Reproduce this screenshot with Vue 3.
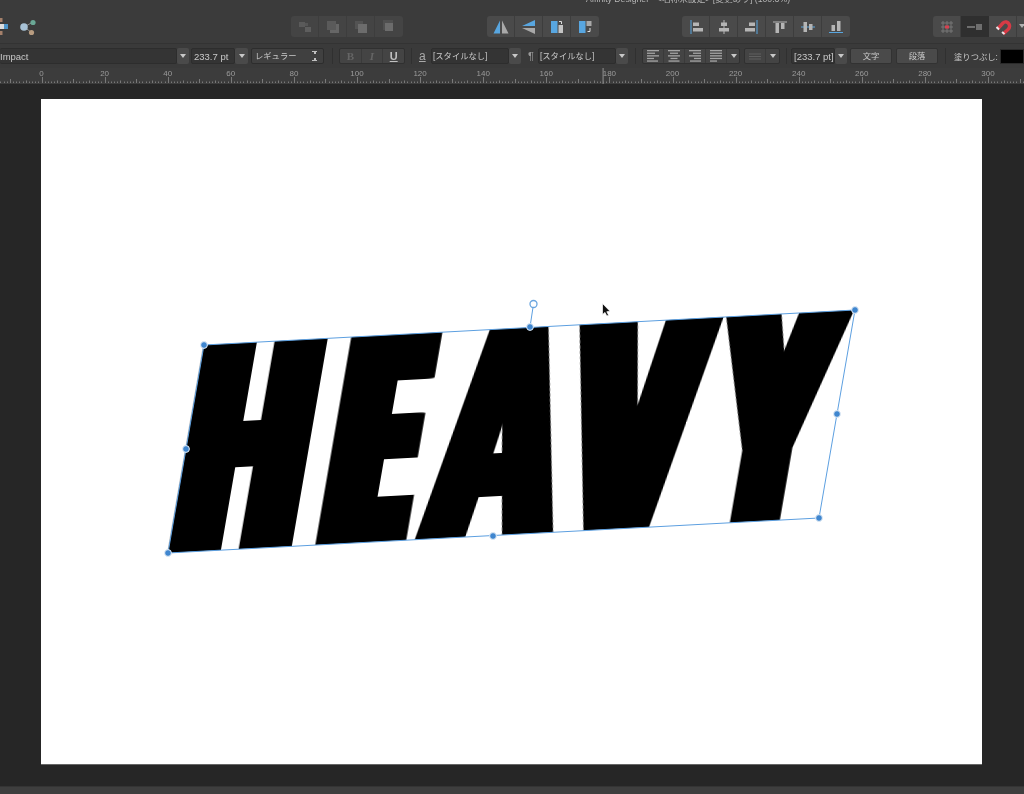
<template>
  <div class="app">
    <header class="topbar soft">
      <div class="title">Affinity Designer - &lt;名称未設定&gt; [変更あり] (100.3%)</div>
      <div class="tools">
        <svg class="persona" width="8" height="18" viewBox="0 0 8 18">
          <rect x="0" y="0" width="2.5" height="4" fill="#a5806a" />
          <rect x="0" y="6" width="4" height="5" fill="#ddd" />
          <rect x="4" y="6" width="4" height="5" fill="#4f94c8" />
          <rect x="0" y="13" width="2.5" height="4" fill="#a5806a" />
        </svg>
        <span class="tool-sep"></span>
        <svg class="share" width="18" height="18" viewBox="0 0 18 18">
          <path d="M5 9 L14 4 M5 9 L12 14" stroke="#8b8b8b" stroke-width="1" />
          <circle cx="5" cy="9" r="3.8" fill="#a8c2d6" />
          <circle cx="14" cy="4.5" r="2.6" fill="#6aa896" />
          <circle cx="12.5" cy="14.5" r="2.6" fill="#b89c80" />
        </svg>

        <div class="group group-off group-a">
          <button v-for="n in 4" :key="n" class="tbtn">
            <svg width="16" height="16" viewBox="0 0 16 16">
              <template v-if="n === 1">
                <rect x="2" y="3" width="6" height="5" fill="#5a5a5a" />
                <rect x="8" y="8" width="6" height="5" fill="#5e5e5e" />
                <rect x="8" y="4" width="3" height="3" fill="#555" />
              </template>
              <template v-else-if="n === 2">
                <rect x="2" y="2" width="9" height="9" fill="#5a5a5a" />
                <path d="M11 5h3v9H5v-3h6z" fill="#666" />
              </template>
              <template v-else-if="n === 3">
                <rect x="2" y="2" width="8" height="8" fill="#535353" />
                <rect x="5" y="5" width="9" height="9" fill="#6c6c6c" />
              </template>
              <template v-else>
                <rect x="2" y="1" width="10" height="10" fill="#505050" />
                <rect x="4" y="4" width="8" height="8" fill="#6c6c6c" />
              </template>
            </svg>
          </button>
        </div>

        <div class="group group-b">
          <button class="tbtn">
            <svg width="18" height="16" viewBox="0 0 18 16">
              <path d="M8 1.5V14.5H1.5z" fill="#58a6e0" />
              <path d="M10 1.5V14.5H16.5z" fill="#a9a9a9" />
            </svg>
          </button>
          <button class="tbtn">
            <svg width="18" height="16" viewBox="0 0 18 16">
              <path d="M15 1V7H2z" fill="#58a6e0" />
              <path d="M15 15V9H2z" fill="#a9a9a9" />
            </svg>
          </button>
          <button class="tbtn">
            <svg width="16" height="16" viewBox="0 0 16 16">
              <rect x="2" y="2" width="6.5" height="12" fill="#58a6e0" />
              <path d="M9.5 6h4.5v8H9.5z" fill="#c4c4c4" />
              <path d="M10 2.5h2.5V5" fill="none" stroke="#ddd" stroke-width="1" />
            </svg>
          </button>
          <button class="tbtn">
            <svg width="16" height="16" viewBox="0 0 16 16">
              <rect x="2" y="2" width="6.5" height="12" fill="#58a6e0" />
              <rect x="9.5" y="2" width="5" height="5" fill="#a9a9a9" />
              <path d="M13 9v3.5h-2.5" fill="none" stroke="#ddd" stroke-width="1" />
            </svg>
          </button>
        </div>

        <div class="group group-c">
          <button class="tbtn nar">
            <svg width="16" height="16" viewBox="0 0 16 16">
              <rect x="2.5" y="1" width="1" height="14" fill="#58a6e0" />
              <rect x="5" y="3.5" width="6" height="3.5" fill="#b5b5b5" />
              <rect x="5" y="9" width="10" height="3.5" fill="#b5b5b5" />
            </svg>
          </button>
          <button class="tbtn nar">
            <svg width="16" height="16" viewBox="0 0 16 16">
              <rect x="7.5" y="1" width="1" height="14" fill="#b5b5b5" />
              <rect x="5" y="3.5" width="6" height="3.5" fill="#b5b5b5" />
              <rect x="3" y="9" width="10" height="3.5" fill="#b5b5b5" />
            </svg>
          </button>
          <button class="tbtn nar">
            <svg width="16" height="16" viewBox="0 0 16 16">
              <rect x="12.5" y="1" width="1" height="14" fill="#58a6e0" />
              <rect x="5" y="3.5" width="6" height="3.5" fill="#b5b5b5" />
              <rect x="1" y="9" width="10" height="3.5" fill="#b5b5b5" />
            </svg>
          </button>
          <button class="tbtn nar">
            <svg width="16" height="16" viewBox="0 0 16 16">
              <rect x="1" y="2.5" width="14" height="1" fill="#b5b5b5" />
              <rect x="3.5" y="4" width="3.5" height="10" fill="#b5b5b5" />
              <rect x="9" y="4" width="3.5" height="6" fill="#b5b5b5" />
            </svg>
          </button>
          <button class="tbtn nar">
            <svg width="16" height="16" viewBox="0 0 16 16">
              <rect x="1" y="7.5" width="14" height="1" fill="#58a6e0" />
              <rect x="3.5" y="3" width="3.5" height="10" fill="#b5b5b5" />
              <rect x="9" y="5" width="3.5" height="6" fill="#b5b5b5" />
            </svg>
          </button>
          <button class="tbtn nar">
            <svg width="16" height="16" viewBox="0 0 16 16">
              <rect x="1" y="13" width="14" height="1" fill="#58a6e0" />
              <rect x="3.5" y="6" width="3.5" height="6" fill="#b5b5b5" />
              <rect x="9" y="2" width="3.5" height="10" fill="#b5b5b5" />
            </svg>
          </button>
        </div>

        <div class="group group-d">
          <button class="tbtn nar">
            <svg width="16" height="16" viewBox="0 0 16 16">
              <path d="M4 2v12M8 2v12M12 2v12M2 4h12M2 8h12M2 12h12" stroke="#777" stroke-width="1" />
              <rect x="6" y="6.5" width="4" height="3" fill="#d8404f" />
            </svg>
          </button>
          <button class="tbtn nar dark">
            <svg width="18" height="16" viewBox="0 0 18 16">
              <rect x="1" y="7" width="8" height="2" fill="#6e6e6e" />
              <rect x="10" y="5" width="6" height="6" fill="#6e6e6e" />
            </svg>
          </button>
          <button class="tbtn nar">
            <svg width="18" height="18" viewBox="0 0 18 18">
              <path d="M3.5 11 L9 5 C11 3 14 4 15 6 C16 8 15.5 10 14 11.5 L9 16" fill="none" stroke="#d73a45" stroke-width="3.4" />
              <path d="M2.5 10 L5 12.5 M8 15 L10.5 17" stroke="#e8e8e8" stroke-width="2" transform="translate(0 -1)" />
            </svg>
          </button>
          <span class="snap-arrow"></span>
        </div>
      </div>
    </header>

    <div class="context soft">
      <div class="field font-name">Impact</div>
      <button class="drop"><i></i></button>
      <div class="field size">233.7 pt</div>
      <button class="drop drop-s"><i></i></button>
      <div class="field weight">
        <span class="ja">レギュラー</span>
        <span class="updown"></span>
      </div>
      <span class="ctx-sep sep-1"></span>
      <div class="btn-row biu">
        <span class="off serif">B</span>
        <span class="off serif it">I</span>
        <span class="under">U</span>
      </div>
      <span class="ctx-sep sep-2"></span>
      <span class="char-a">a</span>
      <div class="field style-a ja">[スタイルなし]</div>
      <button class="drop"><i></i></button>
      <span class="para">¶</span>
      <div class="field style-b ja">[スタイルなし]</div>
      <button class="drop"><i></i></button>
      <span class="ctx-sep sep-3"></span>
      <div class="btn-row aligns">
        <span v-for="a in alignRows" :key="a.id" class="align">
          <svg width="14" height="12" viewBox="0 0 14 12">
            <rect v-for="(r, i) in a.rows" :key="i" :x="r[0]" :y="i * 2.6" :width="r[1]" height="1.3" fill="#a5a5a5" />
          </svg>
        </span>
        <span class="align narrow"><i class="tri"></i></span>
      </div>
      <div class="btn-row lines">
        <span class="align wide">
          <svg width="14" height="8" viewBox="0 0 14 8">
            <path d="M1 2h12M1 4.5h12M1 7h12" stroke="#5f5f5f" stroke-width="1" />
          </svg>
        </span>
        <span class="align narrow"><i class="tri"></i></span>
      </div>
      <span class="ctx-sep sep-4"></span>
      <div class="field leading">[233.7 pt]</div>
      <button class="drop"><i></i></button>
      <button class="push first ja">文字</button>
      <button class="push ja">段落</button>
      <span class="ctx-sep sep-5"></span>
      <span class="fill-label ja">塗りつぶし:</span>
      <span class="swatch"></span>
    </div>

    <div class="ruler soft">
      <span v-for="l in rulerLabels" :key="l.v" class="ruler-label" :style="{ left: l.x + 'px' }">{{ l.v }}</span>
      <svg class="ruler-ticks" width="1024" height="16" viewBox="0 0 1024 16">
        <path :d="rulerPath" stroke="#8e8e8e" stroke-width="1" fill="none" />
        <rect x="602.5" y="0" width="1.2" height="16" fill="#9a9a9a" />
      </svg>
    </div>

    <main class="canvas">
      <div class="page">
        <div class="heavy">
          <span v-for="l in letters" :key="l.ch" class="slot" :style="l.slot">
            <span class="glyph" :style="l.glyph">{{ l.ch }}</span>
          </span>
        </div>
        <svg class="art" viewBox="41 99 941 665">
          <polygon points="204,345 855,310 819,518 168,553" fill="none" stroke="#5c9fe0" stroke-width="1" />
          <line x1="530" y1="327" x2="533.5" y2="304" stroke="#5c9fe0" stroke-width="1" />
          <circle cx="533.5" cy="304" r="3.5" fill="#fff" stroke="#6aa5df" stroke-width="1.3" />
          <circle v-for="(h, i) in handles" :key="i" :cx="h[0]" :cy="h[1]" r="3.4" fill="#3f86cf" stroke="#e6eef6" stroke-width="1" />
          <path d="M602.5 303.5 L602.5 314.5 L605 312.4 L606.8 316 L608.6 315.2 L606.8 311.7 L610 311.3 Z" fill="#111" stroke="#fff" stroke-width="0.7" />
        </svg>
      </div>
    </main>

    <footer class="statusbar"></footer>
  </div>
</template>

<script setup>
const RULER_ZERO = 41.5
const UNIT = 3.155

const handles = [
  [204, 345],
  [855, 310],
  [819, 518],
  [168, 553],
  [186, 449],
  [837, 414],
  [493, 536],
  [530, 327]
]

const alignRows = [
  { id: 'left', rows: [[1, 12], [1, 8], [1, 12], [1, 7], [1, 11]] },
  { id: 'center', rows: [[1, 12], [3, 8], [1, 12], [3.5, 7], [1.5, 11]] },
  { id: 'right', rows: [[1, 12], [5, 8], [1, 12], [6, 7], [2, 11]] },
  { id: 'justify', rows: [[1, 12], [1, 12], [1, 12], [1, 12], [1, 7]] }
]

const rulerLabels = []
for (let v = 0; v <= 300; v += 20) {
  rulerLabels.push({ v, x: RULER_ZERO + v * UNIT })
}

let d = ''
for (let u = -14; u <= 312; u++) {
  const x = Math.round(RULER_ZERO + u * UNIT) + 0.5
  let top = 13.5
  if (u % 20 === 0) top = 9
  else if (u % 10 === 0) top = 11
  else if (u % 5 === 0) top = 12.5
  d += `M${x} ${top}V15`
}
const rulerPath = d

// Impact is not installed: Inter Black squeezed per letter and fattened sideways
const fatten = (px, scale) => {
  const parts = []
  const reach = px / scale
  for (let o = 2; o <= reach; o += 2) parts.push(`${o}px 0 #000`)
  return parts.join(',')
}

const letters = [
  { ch: 'H', w: 148, s: 0.54, fat: 23, off: -7.5 },
  { ch: 'E', w: 98, s: 0.393, fat: 33, off: -6 },
  { ch: 'A', w: 130, s: 0.58, fat: 14, off: -3 },
  { ch: 'V', w: 147, s: 0.57, fat: 22, off: -4 },
  { ch: 'Y', w: 128, s: 0.51, fat: 22, off: -4 }
].map((l) => ({
  ch: l.ch,
  slot: { width: l.w + 'px' },
  glyph: {
    transform: `translateX(${l.off}px) scaleX(${l.s})`,
    textShadow: fatten(l.fat, l.s)
  }
}))
</script>

<style scoped>
.app {
  width: 1024px;
  height: 794px;
  display: flex;
  flex-direction: column;
  overflow: hidden;
  background: #262626;
  font-family: 'Liberation Sans', 'Noto Sans CJK JP', sans-serif;
  color: #c9c9c9;
  font-size: 9.5px;
}

button {
  font: inherit;
  color: inherit;
  border: 0;
  padding: 0;
}

.soft {
  filter: blur(0.35px);
}

.topbar {
  height: 44px;
  flex: none;
  background: #3b3b3b;
  border-bottom: 1px solid #333;
  box-sizing: border-box;
  overflow: hidden;
}

.title {
  height: 16px;
  margin-top: -7px;
  margin-left: 586px;
  font-size: 8.7px;
  line-height: 12px;
  color: #b5b5b5;
  white-space: nowrap;
}

.tools {
  display: flex;
  align-items: center;
  height: 21px;
  margin-top: 7px;
}

.persona {
  flex: none;
  margin-top: 1px;
}

.tool-sep {
  width: 1px;
  height: 18px;
  margin-left: 6px;
  background: #2f2f2f;
}

.share {
  flex: none;
  margin-left: 5px;
}

.group {
  display: flex;
  height: 21px;
  border-radius: 3px;
  background: #4a4a4a;
  overflow: hidden;
  flex: none;
}

.group-a { margin-left: 254px; }
.group-b { margin-left: 84px; }
.group-c { margin-left: 83px; }
.group-d { margin-left: 83px; width: 92px; }

.group-off {
  background: #444;
}

.tbtn {
  width: 28px;
  height: 21px;
  display: flex;
  align-items: center;
  justify-content: center;
  background: transparent;
  border-right: 1px solid #3d3d3d;
}

.tbtn:last-child {
  border-right: 0;
}

.nar {
  width: 28px;
}

.dark {
  background: #2f2f2f;
  border-right: 0;
}

.snap-arrow {
  width: 0;
  height: 0;
  margin: 8px 0 0 2px;
  border: 3.5px solid transparent;
  border-top: 4px solid #b0b0b0;
}

.context {
  height: 24px;
  flex: none;
  display: flex;
  align-items: center;
  background: #3a3a3a;
  box-sizing: border-box;
}

.field {
  height: 16px;
  line-height: 15px;
  box-sizing: border-box;
  background: #343434;
  border: 1px solid #2d2d2d;
  border-radius: 2px;
  padding: 0 3px;
  white-space: nowrap;
  flex: none;
}

.ja {
  font-size: 8.3px;
}

.font-name {
  width: 177px;
  padding-left: 0;
  border-left: 0;
}

.size {
  width: 44px;
  margin-left: 2px;
  padding-left: 2px;
}

.weight {
  width: 73px;
  margin-left: 3px;
  padding-left: 3px;
  display: flex;
  justify-content: space-between;
  background: #404040;
}

.updown {
  width: 5px;
  height: 10px;
  margin: 2px 3px 0 0;
  background:
    linear-gradient(45deg, transparent 50%, #c0c0c0 50%) 0 0 / 3px 3px no-repeat,
    linear-gradient(-45deg, transparent 50%, #c0c0c0 50%) 2.5px 0 / 3px 3px no-repeat,
    linear-gradient(135deg, transparent 50%, #c0c0c0 50%) 0 7px / 3px 3px no-repeat,
    linear-gradient(-135deg, transparent 50%, #c0c0c0 50%) 2.5px 7px / 3px 3px no-repeat;
}

.drop {
  width: 12px;
  height: 16px;
  flex: none;
  background: #4a4a4a;
  border-radius: 2px;
  display: flex;
  align-items: center;
  justify-content: center;
}

.drop i,
.tri {
  display: block;
  width: 0;
  height: 0;
  margin-top: 3px;
  border: 3px solid transparent;
  border-top: 4px solid #c8c8c8;
}

.drop-s {
  width: 13px;
}

.ctx-sep {
  width: 1px;
  height: 16px;
  background: #303030;
  flex: none;
}

.sep-1 { margin-left: 8px; }
.sep-2 { margin-left: 6px; }
.sep-3 { margin-left: 7px; }
.sep-4 { margin-left: 6px; }
.sep-5 { margin-left: 7px; }

.btn-row {
  display: flex;
  height: 16px;
  flex: none;
  background: #444;
  border: 1px solid #303030;
  border-radius: 2px;
  box-sizing: border-box;
  overflow: hidden;
}

.biu {
  width: 66px;
  margin-left: 6px;
}

.biu span {
  flex: 1;
  text-align: center;
  font-size: 11px;
  line-height: 14px;
  font-weight: 700;
  border-right: 1px solid #3a3a3a;
}

.biu span:last-child {
  border-right: 0;
}

.serif {
  font-family: 'Liberation Serif', serif;
}

.it {
  font-style: italic;
}

.off {
  color: #656565;
}

.under {
  text-decoration: underline;
  color: #c0c0c0;
}

.char-a {
  margin-left: 7px;
  width: 11px;
  font-size: 12px;
  line-height: 12px;
  text-decoration: underline;
  color: #aaa;
  flex: none;
}

.style-a {
  width: 78px;
  margin-left: 1px;
  padding-left: 1px;
}

.para {
  margin-left: 7px;
  width: 9px;
  font-size: 11px;
  color: #999;
  flex: none;
}

.style-b {
  width: 78px;
  margin-left: 1px;
  padding-left: 1px;
}

.aligns {
  width: 98px;
  margin-left: 6px;
}

.align {
  width: 21px;
  display: flex;
  align-items: center;
  justify-content: center;
  border-right: 1px solid #3a3a3a;
  box-sizing: border-box;
  flex: none;
}

.align:last-child {
  border-right: 0;
}

.narrow {
  width: 13px;
}

.wide {
  width: 21px;
}

.lines {
  width: 36px;
  margin-left: 4px;
}

.leading {
  width: 44px;
  margin-left: 4px;
  padding-left: 2px;
}

.push {
  width: 42px;
  height: 16px;
  flex: none;
  margin-left: 4px;
  background: #4a4a4a;
  border: 1px solid #323232;
  border-radius: 2px;
  box-sizing: border-box;
  line-height: 14px;
  text-align: center;
}

.push.first {
  margin-left: 3px;
}

.fill-label {
  margin-left: 8px;
  width: 46px;
  white-space: nowrap;
  flex: none;
}

.swatch {
  width: 24px;
  height: 15px;
  flex: none;
  background: #000;
  border: 1px solid #2a2a2a;
  box-sizing: border-box;
}

.ruler {
  position: relative;
  height: 16px;
  flex: none;
  background: #3c3c3c;
}

.ruler-label {
  position: absolute;
  top: 1px;
  transform: translateX(-50%);
  font-size: 8px;
  line-height: 10px;
  color: #9b9b9b;
}

.ruler-ticks {
  position: absolute;
  left: 0;
  top: 0;
  opacity: 0.75;
}

.canvas {
  flex: 1;
  background: #262626;
  padding: 15px 42px 0 41px;
  min-height: 0;
}

.page {
  position: relative;
  height: 665px;
  background: #fff;
  box-shadow: 0 1px 0 #666;
}

.art {
  position: absolute;
  left: 0;
  top: 0;
  width: 941px;
  height: 665px;
  overflow: visible;
}

.heavy {
  position: absolute;
  left: 127px;
  top: 246px;
  width: 651px;
  height: 208px;
  display: flex;
  transform: matrix(1, -0.0538, -0.173, 1, 0, 0);
  transform-origin: 0 100%;
  will-change: transform;
  font-family: Inter, 'Liberation Sans', sans-serif;
  font-weight: 900;
  font-size: 286px;
  line-height: 208px;
  color: #000;
}

.slot {
  display: block;
  flex: none;
}

.glyph {
  display: inline-block;
  transform-origin: 0 50%;
}

.statusbar {
  height: 8px;
  flex: none;
  background: #3e3e3e;
  border-top: 1px solid #343434;
  box-sizing: border-box;
}
</style>
